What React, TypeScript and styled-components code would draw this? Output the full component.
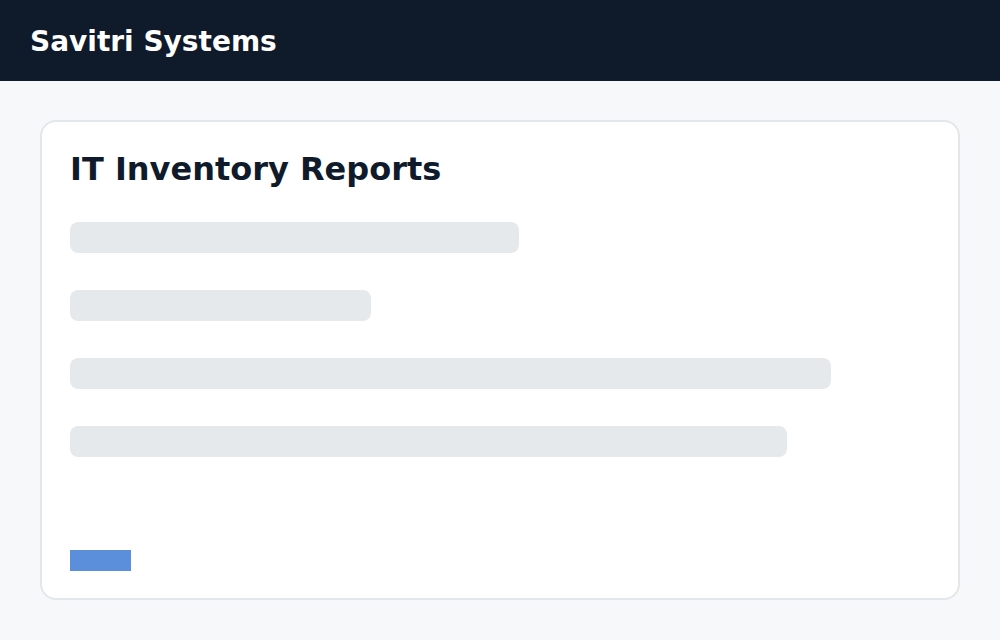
import styled, { createGlobalStyle } from 'styled-components';

const GlobalStyle = createGlobalStyle`
  html, body {
    margin: 0;
    padding: 0;
    background: #f7f8fa;
    font-family: "DejaVu Sans", "Liberation Sans", sans-serif;
  }
`;

const Header = styled.header`
  height: 81px;
  background: #0f1b2a;
  display: flex;
  align-items: center;
  padding: 2px 30px 0;
  box-sizing: border-box;
`;

const Brand = styled.h1`
  margin: 0;
  color: #ffffff;
  font-size: 28px;
  font-weight: 700;
`;

const Main = styled.main`
  padding: 39px 40px 40px;
`;

const Card = styled.section`
  height: 480px;
  box-sizing: border-box;
  background: #ffffff;
  border: 2px solid #e3e6ea;
  border-radius: 16px;
  padding: 28px 28px 27px;
  display: flex;
  flex-direction: column;
`;

const Title = styled.h2`
  margin: 0 0 34px;
  color: #0f1b2a;
  font-size: 32px;
  font-weight: 700;
`;

const SkeletonList = styled.div`
  display: flex;
  flex-direction: column;
  gap: 37px;
`;

const SkeletonBar = styled.div<{ $width: number }>`
  width: ${(p) => p.$width}px;
  height: 31px;
  border-radius: 8px;
  background: #e6e9ec;
`;

const ActionStub = styled.div`
  margin-top: auto;
  width: 61px;
  height: 21px;
  background: #5b8edb;
`;

const bars = [449, 301, 761, 717];

export default function App() {
  return (
    <>
      <GlobalStyle />
      <Header>
        <Brand>Savitri Systems</Brand>
      </Header>
      <Main>
        <Card>
          <Title>IT Inventory Reports</Title>
          <SkeletonList>
            {bars.map((w, i) => (
              <SkeletonBar key={i} $width={w} />
            ))}
          </SkeletonList>
          <ActionStub />
        </Card>
      </Main>
    </>
  );
}
